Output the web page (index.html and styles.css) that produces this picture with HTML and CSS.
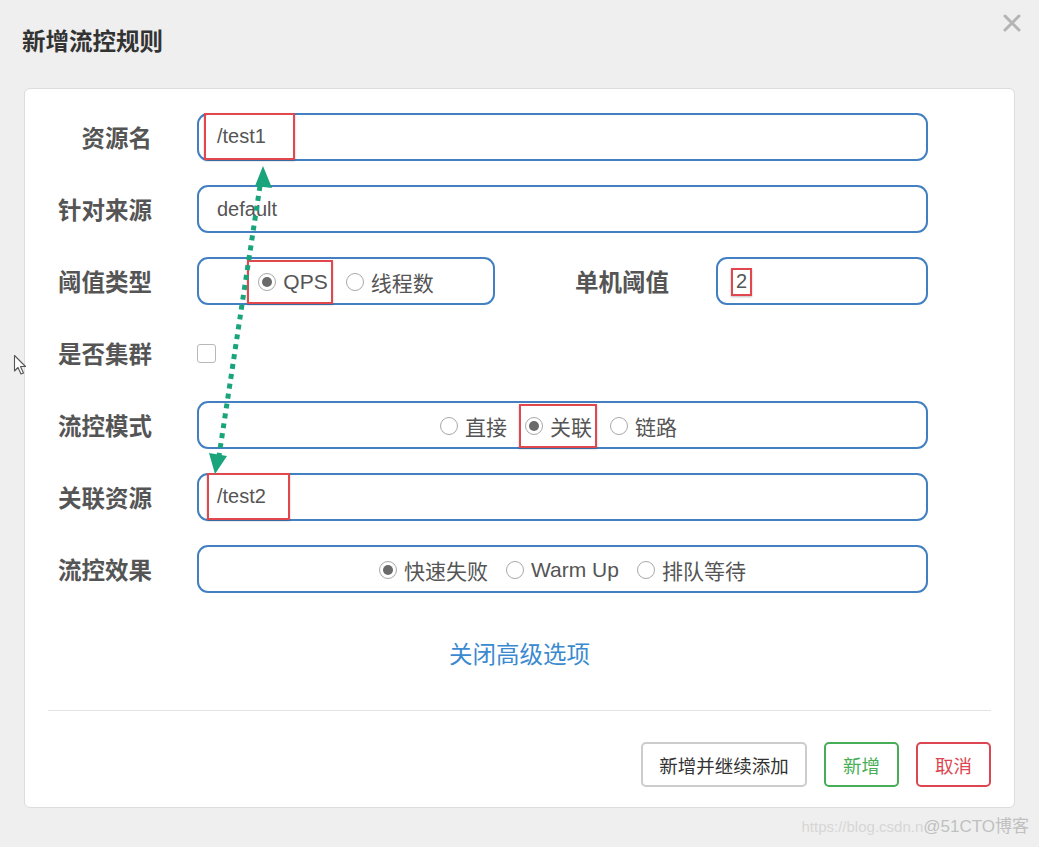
FILE: index.html
```html
<!DOCTYPE html>
<html lang="zh">
<head>
<meta charset="utf-8">
<title>新增流控规则</title>
<link rel="stylesheet" href="styles.css">
</head>
<body>
<div class="page">
  <header class="modal-header">
    <h1 class="title">新增流控规则</h1>
    <svg class="close" width="18" height="18" viewBox="0 0 18 18"><path d="M2 2 L16 16 M16 2 L2 16" stroke="#b4b4b4" stroke-width="3" stroke-linecap="round"/></svg>
  </header>

  <section class="card">
    <div class="form">
      <div class="row">
        <label class="label">资源名</label>
        <div class="field"><span class="mark mark-full">/test1</span></div>
      </div>
      <div class="row">
        <label class="label">针对来源</label>
        <div class="field">default</div>
      </div>
      <div class="row">
        <label class="label">阈值类型</label>
        <div class="field field-type radios">
          <span class="mark mark-opt mark-qps"><span class="radio checked"></span>QPS</span>
          <span class="opt"><span class="radio"></span>线程数</span>
        </div>
        <label class="label label-mid">单机阈值</label>
        <div class="field field-num"><span class="mark mark-small">2</span></div>
      </div>
      <div class="row">
        <label class="label">是否集群</label>
        <span class="checkbox"></span>
      </div>
      <div class="row">
        <label class="label">流控模式</label>
        <div class="field radios radios-mode">
          <span class="opt"><span class="radio"></span>直接</span>
          <span class="mark mark-opt"><span class="radio checked"></span>关联</span>
          <span class="opt"><span class="radio"></span>链路</span>
        </div>
      </div>
      <div class="row">
        <label class="label">关联资源</label>
        <div class="field"><span class="mark mark-full mark-t2">/test2</span></div>
      </div>
      <div class="row">
        <label class="label">流控效果</label>
        <div class="field radios">
          <span class="opt"><span class="radio checked"></span>快速失败</span>
          <span class="opt"><span class="radio"></span>Warm Up</span>
          <span class="opt"><span class="radio"></span>排队等待</span>
        </div>
      </div>
    </div>

    <div class="advanced"><a class="link">关闭高级选项</a></div>

    <div class="divider"></div>

    <div class="actions">
      <button class="btn btn-default">新增并继续添加</button>
      <button class="btn btn-success">新增</button>
      <button class="btn btn-danger">取消</button>
    </div>
  </section>

  <footer class="watermark"><span class="wm1">https://blog.csdn.n</span><span class="wm2">@51CTO博客</span></footer>

  <svg class="overlay" width="1039" height="847" viewBox="0 0 1039 847">
    <line x1="260" y1="186" x2="219" y2="456" stroke="#19a47c" stroke-width="5" stroke-dasharray="5 5"/>
    <polygon points="263,166 255,186 272,188" fill="#19a47c"/>
    <polygon points="215,474 209,453 227,456" fill="#19a47c"/>
  </svg>
  <svg class="cursor" width="16" height="24" viewBox="0 0 16 24"><path d="M1.5 1.5 L1.5 17 L5 13.5 L8 20 L10.5 19 L7.5 12.5 L12.5 12.5 Z" fill="#fff" stroke="#555" stroke-width="1.1" stroke-linejoin="round"/></svg>
</div>
</body>
</html>
```

FILE: styles.css
```css
* { box-sizing: border-box; }
html, body { margin: 0; padding: 0; }
body {
  background: #efefef;
  font-family: "Liberation Sans", "Noto Sans CJK SC", sans-serif;
  color: #555;
}
.page {
  position: relative;
  width: 1039px;
  height: 847px;
  overflow: hidden;
}
.modal-header {
  position: relative;
  height: 88px;
  padding: 24px 0 0 22px;
}
.title {
  margin: 0;
  font-size: 23.5px;
  line-height: 32px;
  font-weight: bold;
  color: #333;
  font-family: "Noto Sans CJK SC", sans-serif;
}
.close {
  position: absolute;
  right: 18px;
  top: 14px;
}
.card {
  margin-left: 24px;
  width: 991px;
  height: 720px;
  background: #fff;
  border: 1px solid #dcdcdc;
  border-radius: 6px;
  padding: 24px 23px 21px 0;
  display: flex;
  flex-direction: column;
}
.form {
  display: flex;
  flex-direction: column;
  gap: 24px;
  padding-right: 63px;
  flex: none;
}
.row {
  display: flex;
  align-items: center;
  height: 48px;
}
.label {
  width: 127px;
  margin-right: 45px;
  flex: none;
  text-align: right;
  font-family: "Noto Sans CJK SC", sans-serif;
  font-weight: bold;
  font-size: 23.5px;
  color: #555;
}
.label-mid {
  width: 174px;
  margin-right: 47px;
}
.field {
  flex: 1;
  height: 48px;
  border: 2px solid #4380c2;
  border-radius: 11px;
  display: flex;
  align-items: center;
  padding-left: 18px;
  padding-top: 1px;
  font-size: 20px;
  color: #555;
}
.field-type {
  flex: none;
  width: 298px;
}
.field-num {
  padding-left: 13px;
}
.radios {
  justify-content: center;
  padding-left: 0;
  gap: 18px;
}
.radios-mode {
  padding-right: 8px;
}
.opt, .mark-opt {
  display: inline-flex;
  align-items: center;
  gap: 7px;
  font-size: 21px;
  color: #555;
}
.radio {
  width: 18px;
  height: 18px;
  border: 1px solid #a8a8a8;
  border-radius: 50%;
  position: relative;
  background: #fff;
  flex: none;
}
.radio.checked::after {
  content: "";
  position: absolute;
  left: 3px;
  top: 3px;
  width: 10px;
  height: 10px;
  border-radius: 50%;
  background: #6a6a6a;
}
.mark {
  border: 2px solid #e2474d;
  box-shadow: 0 1px 2px rgba(0,0,0,0.25);
}
.mark-full {
  align-self: stretch;
  display: flex;
  align-items: center;
  margin: -3px 0 -1px -13px;
  padding: 0 11px;
  width: 91px;
}
.mark-t2 {
  margin-left: -10px;
  padding-left: 8px;
  width: 83px;
}
.mark-opt {
  height: 44px;
  padding: 0 3px 0 4px;
  margin: 0 -5px 0 -6px;
}
.mark-qps {
  padding-left: 9px;
  margin-left: -11px;
}
.mark-small {
  display: inline-flex;
  align-items: center;
  height: 28px;
  padding: 0 3px;
}
.checkbox {
  width: 19px;
  height: 19px;
  border: 1px solid #b8b8b8;
  border-radius: 3px;
  background: #fff;
}
.advanced {
  margin-top: 44px;
  text-align: center;
  padding-left: 23px;
  flex: none;
}
.link {
  font-family: "Noto Sans CJK SC", sans-serif;
  font-size: 23.5px;
  line-height: 32px;
  color: #3b8ad0;
  text-decoration: none;
}
.divider {
  flex: none;
  margin: 41px 0 0 23px;
  height: 1px;
  background: #e3e3e3;
}
.actions {
  flex: none;
  margin-top: 31px;
  display: flex;
  justify-content: flex-end;
  gap: 17px;
}
.btn {
  height: 45px;
  border-radius: 5px;
  background: #fff;
  font-family: "Noto Sans CJK SC", sans-serif;
  font-size: 18.5px;
  padding: 0;
  white-space: nowrap;
  border: 2px solid #ccc;
  color: #333;
}
.btn-default { width: 166px; }
.btn-success { width: 75px; border-color: #47ad56; color: #47ad56; }
.btn-danger { width: 75px; border-color: #dc4650; color: #dc4650; }
.watermark {
  display: flex;
  justify-content: flex-end;
  align-items: baseline;
  padding: 9px 10px 0 0;
  line-height: 20px;
  font-family: "Liberation Sans", "Noto Sans CJK SC", sans-serif;
}
.wm1 { color: #d6d6d6; font-size: 15px; }
.wm2 { color: #c0c0c0; font-size: 17px; }
.overlay {
  position: absolute;
  left: 0;
  top: 0;
  pointer-events: none;
}
.cursor {
  position: absolute;
  left: 13px;
  top: 354px;
}
```
